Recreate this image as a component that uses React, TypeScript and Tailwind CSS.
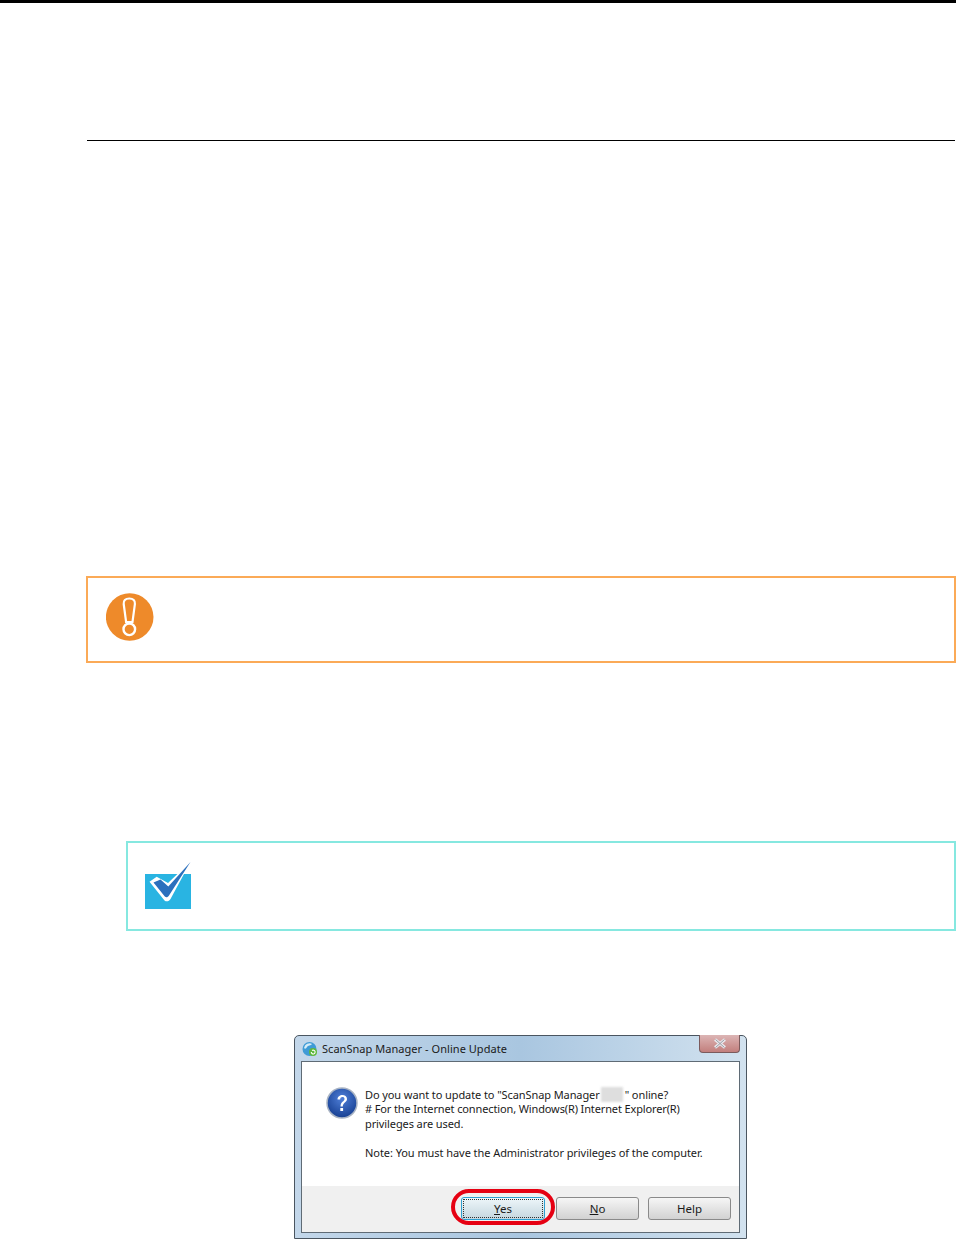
export default function App() {
  const font = { fontFamily: '"Noto Sans", sans-serif' };
  return (
    <div className="w-[956px] h-[1239px] bg-white overflow-hidden" style={font}>
      <div className="h-[3px] bg-black" />
      <div className="ml-[87px] mr-[1px] mt-[137px] h-px bg-black" />
      <div className="ml-[86px] mt-[435px] h-[87px] border-2 border-[#fbaa57] flex items-start pl-[18px] pt-[15px]">
        <svg width="48" height="48" viewBox="0 0 48 48" className="shrink-0">
          <circle cx="23.700" cy="24" r="23.800" fill="#ee8a2a" />
          <path d="M23.300 5.500c4 0 6 2 5.600 5.500L26.500 29h-6.400L17.700 11C17.300 7.500 19.300 5.500 23.300 5.500Z" fill="none" stroke="#fff" strokeWidth="2.200" />
          <circle cx="23.300" cy="36.300" r="5.800" fill="none" stroke="#fff" strokeWidth="2.400" />
        </svg>
      </div>
      <div className="ml-[126px] mt-[178px] h-[90px] border-2 border-[#86e8e0] flex items-start pl-[17px] pt-[18px]">
        <svg width="48" height="50" viewBox="0 0 48 50" className="shrink-0">
          <rect x="0" y="13" width="46" height="35" fill="#29b4e2" />
          <path d="M4.500 20.700L11.700 15.700L23 22L46 0L25.500 38C24 40.500 21.500 41 19.500 39.500Z" fill="#fff" />
          <path d="M8.500 21.500L15.500 18.500L23.300 25.500L45.500 1L24 34.500C22.800 36.500 21 36.800 19.800 35.500Z" fill="#2b70bd" />
        </svg>
      </div>
      <div className="ml-[294px] mt-[104px] w-[453px] h-[204px] relative rounded-t-[5px] border border-[#4a5560] bg-gradient-to-r from-[#c3d7ea] via-[#a9c6e0] to-[#d2e2ef] px-[6px] pb-[5px] flex flex-col text-[11px] leading-[15px] text-[#1a1a1a]">
        <div className="h-[25px] shrink-0 flex items-center relative">
          <svg width="16" height="16" viewBox="0 0 16 16" className="ml-[1px] mr-[4px] shrink-0">
            <circle cx="7.500" cy="8" r="7" fill="#3f9bd6" />
            <path d="M3 4.500c2-2 5-3 7-1.500-1 2-4 1-5 3s-2 2-3 1z" fill="#d5ecf8" />
            <circle cx="11" cy="11" r="4" fill="#5fb83c" />
            <path d="M9.300 11a1.900 1.900 0 1 0 .8-1.500" fill="none" stroke="#fff" strokeWidth="1.100" />
          </svg>
          <span className="text-[11px] tracking-[0.04px]">ScanSnap Manager - Online Update</span>
          <div className="absolute right-0 top-[-1px] w-[41px] h-[18px] rounded-b-[4px] border border-t-0 border-[#7b5a5c] bg-gradient-to-b from-[#dcb5b5] to-[#c27f7d] flex items-center justify-center">
            <svg width="14" height="11" viewBox="0 0 14 11">
              <path d="M2 1.500L12 9.500M12 1.500L2 9.500" stroke="#e8e8ec" strokeWidth="3" />
              <path d="M2.500 1.500L11.500 9.500M11.500 1.500L2.500 9.500" stroke="#9a9aa2" strokeWidth="1" />
            </svg>
          </div>
        </div>
        <div className="flex-1 flex flex-col bg-white border border-[#5f6b75]">
          <div className="flex-1 flex items-start pl-[24px] pt-[25px]">
            <svg width="32" height="32" viewBox="0 0 32 32" className="shrink-0">
              <defs>
                <radialGradient id="q" cx="50%" cy="35%" r="70%">
                  <stop offset="0%" stopColor="#4f7fd8" />
                  <stop offset="100%" stopColor="#123a8c" />
                </radialGradient>
              </defs>
              <circle cx="16" cy="16" r="15" fill="url(#q)" stroke="#a9b4c4" strokeWidth="1.500" />
              <path d="M11.500 12.500c0-6 9.500-6 9.500-.5 0 3.500-4.200 3.500-4.200 7.500h-2.300c0-5 4-5 4-7.500 0-2.600-4.300-2.600-4.300.5Z" fill="#fff" />
              <rect x="14.300" y="21" width="2.800" height="3" fill="#fff" />
            </svg>
            <div className="ml-[7px] mt-[0px]">
              <div className="flex items-center whitespace-nowrap h-[14px] tracking-[-0.09px]">
                <span>Do you want to update to "ScanSnap Manager</span>
                <span className="w-[22px] h-[15px] bg-[#dedede] blur-[1px] mx-[1.500px] shrink-0" />
                <span>" online?</span>
              </div>
              <div className="whitespace-nowrap tracking-[-0.13px]">
                # For the Internet connection, Windows(R) Internet Explorer(R)
              </div>
              <div className="whitespace-nowrap tracking-[-0.1px]">privileges are used.</div>
              <div className="mt-[14px] whitespace-nowrap tracking-[-0.06px]">Note: You must have the Administrator privileges of the computer.</div>
            </div>
          </div>
          <div className="h-[46px] shrink-0 bg-[#f0f0f0] flex justify-end items-start pt-[11px] pr-[8px] gap-[9px] relative text-[11.500px]">
            <div className="w-[84px] h-[23px] flex items-center justify-center rounded-[3px] border border-[#2f9fd0] outline-1 outline-dotted outline-offset-[-3px] outline-[#333] bg-gradient-to-b from-[#eef6fa] to-[#c5d7df] mr-[2px]">
              <span><u>Y</u>es</span>
            </div>
            <div className="w-[83px] h-[23px] flex items-center justify-center rounded-[3px] border border-[#8a8a8a] bg-gradient-to-b from-[#f6f6f6] to-[#d2d2d2]">
              <span><u>N</u>o</span>
            </div>
            <div className="w-[83px] h-[23px] flex items-center justify-center rounded-[3px] border border-[#8a8a8a] bg-gradient-to-b from-[#f6f6f6] to-[#d2d2d2]">
              Help
            </div>
            <div className="absolute left-[149px] top-[3px] w-[104px] h-[36px] rounded-[18px] border-[4px] border-[#e60012]" />
          </div>
        </div>
      </div>
    </div>
  );
}
